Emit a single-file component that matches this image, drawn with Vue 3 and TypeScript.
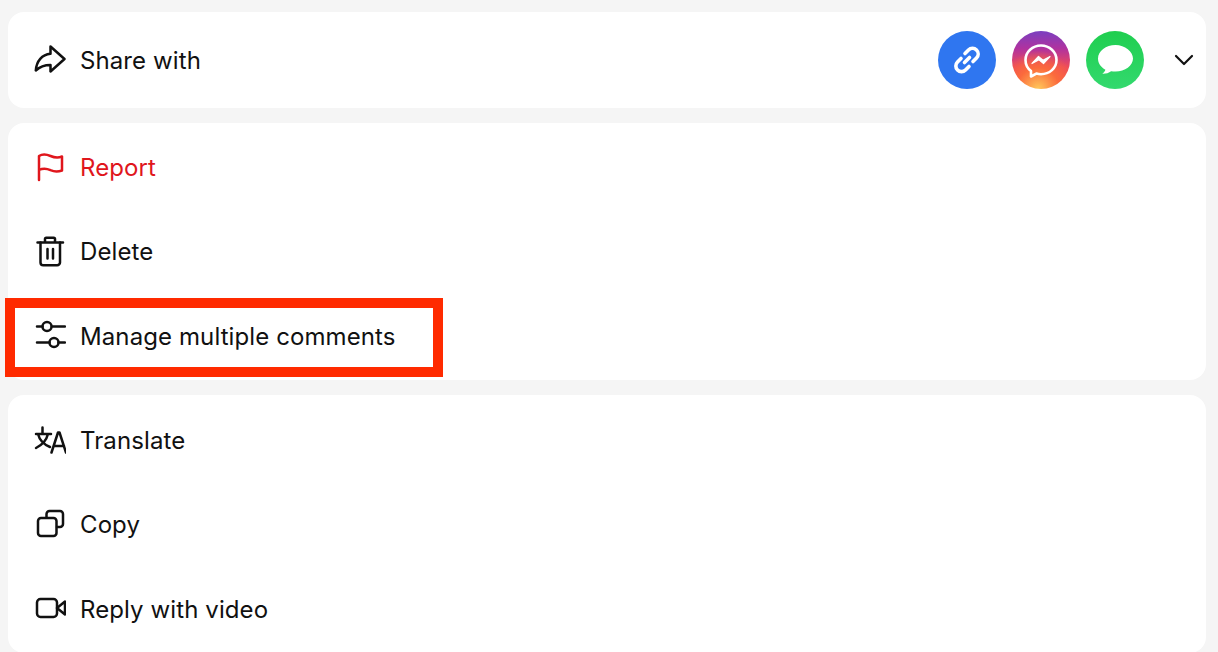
<script setup lang="ts">
const firstGroup = [
  { label: "Report", icon: "flag", danger: true },
  { label: "Delete", icon: "trash" },
  { label: "Manage multiple comments", icon: "sliders", marked: true },
];
const secondGroup = [
  { label: "Translate", icon: "translate" },
  { label: "Copy", icon: "copy" },
  { label: "Reply with video", icon: "video" },
];
const groups = [firstGroup, secondGroup];
</script>

<template>
  <div class="page">
    <section class="card share">
      <svg class="icon" viewBox="0 0 32 32" fill="none" stroke="currentColor" stroke-width="2.5" stroke-linejoin="round" stroke-linecap="round">
        <path d="M16.5 2.500 30.500 15 16.500 27.500V21C10 21 5.500 23 1.800 26.500 2.500 17 8 10.500 16.500 9.800Z" />
      </svg>
      <span class="label">Share with</span>
      <div class="apps">
        <div class="app link">
          <svg viewBox="0 0 58 58" fill="none" stroke="#fff" stroke-width="3.6" stroke-linecap="round">
            <path d="M27 22.500 30.500 19a5.600 5.600 0 0 1 8 8L35 30.500" />
            <path d="M31 35.500 27.500 39a5.600 5.600 0 0 1-8-8L23 27.500" />
            <path d="M26.500 31.500 31.500 26.500" />
          </svg>
        </div>
        <div class="app messenger">
          <svg viewBox="0 0 58 58">
            <path d="M29 14.500C20.500 14.500 13.500 20.800 13.500 29c0 4.500 2.100 8.400 5.500 11.100V45.500l5.300-2.900c1.500.4 3 .6 4.700.6 8.500 0 15.500-6.100 15.500-14.200S37.500 14.500 29 14.500Z" fill="none" stroke="#fff" stroke-width="2.600" stroke-linejoin="round" />
            <path d="M20 32.500 26.500 25.500 31 29.200 38 25.500 31.500 32.500 27 28.800Z" fill="#fff" stroke="#fff" stroke-width="1.200" stroke-linejoin="round" />
          </svg>
        </div>
        <div class="app message">
          <svg viewBox="0 0 58 58">
            <path d="M29.500 14C20 14 12 20 12 27.500c0 4.700 2.900 8.700 7.400 11.200-.6 1.600-1.700 3-3.100 4 3.200.2 6.400-.7 8.800-2.500 1.400.3 2.900.4 4.400.4 9.500 0 17.500-6.100 17.500-13.100S39 14 29.500 14Z" fill="#fff" />
          </svg>
        </div>
        <svg class="chevron" viewBox="0 0 20 12" fill="none" stroke="currentColor" stroke-width="2.200" stroke-linecap="round" stroke-linejoin="round">
          <path d="M2 2 10 10 18 2" />
        </svg>
      </div>
    </section>

    <section v-for="(group, i) in groups" :key="i" class="card list">
      <div v-for="item in group" :key="item.label" class="row" :class="{ danger: item.danger }">
        <svg class="icon" viewBox="0 0 32 32" fill="none" stroke="currentColor" stroke-width="2.500" stroke-linecap="round" stroke-linejoin="round">
          <template v-if="item.icon === 'flag'">
            <path d="M5 28V4C9 1.500 13 2.500 16.500 4c4 1.700 8 2 11.500.5v14c-4 1.500-8 1.300-11.500-.3C13 16.500 9 16 5 18" />
          </template>
          <template v-else-if="item.icon === 'trash'">
            <path d="M3.500 6.500H29M11 6.500V3c0-.8.500-1.300 1.300-1.300h7.400c.8 0 1.300.5 1.300 1.300v3.500" />
            <path d="M6.500 6.500V26.500A2.800 2.800 0 0 0 9.300 29.300H23.200A2.800 2.800 0 0 0 26 26.500V6.500" />
            <path d="M13.500 13V22.500M19 13V22.500" />
          </template>
          <template v-else-if="item.icon === 'sliders'">
            <path d="M3 6.500H8.500M18 6.500H31M3 22.500H15.500M24.500 22.500H31" />
            <circle cx="13" cy="6.500" r="4.500" />
            <circle cx="20" cy="22.500" r="4.500" />
          </template>
          <template v-else-if="item.icon === 'translate'">
            <path d="M2 9H17M8.500 2.500V9M14 9C12.500 15 8 20 2 23M4 9C5.500 15 10 19.500 16 22" />
            <path d="M17.500 27.500 24 7.500H25.500L32 27.500M19.500 21H30" />
          </template>
          <template v-else-if="item.icon === 'copy'">
            <path d="M12.500 8.500V5a3 3 0 0 1 3-3H26a3 3 0 0 1 3 3V15a3 3 0 0 1-3 3H23" />
            <rect x="4" y="9" width="18.500" height="18" rx="3" />
          </template>
          <template v-else>
            <rect x="3" y="6" width="20" height="18" rx="3.500" />
            <path d="M23 15 31 8.500V21.500Z" />
          </template>
        </svg>
        <span class="label">{{ item.label }}</span>
        <div v-if="item.marked" class="mark"></div>
      </div>
    </section>
  </div>
</template>

<style>
html,
body {
  background: #f5f5f5;
  overflow: hidden;
}
</style>

<style scoped>
.page {
  height: 652px;
  box-sizing: border-box;
  padding: 12px 12px 0 8px;
  overflow: hidden;
  display: flex;
  flex-direction: column;
  gap: 15.500px;
  font-family: Inter, "Liberation Sans", sans-serif;
  color: #111;
}
.card {
  background: #fff;
  border-radius: 16px;
  flex: none;
}
.share {
  height: 95.500px;
  box-sizing: border-box;
  display: flex;
  align-items: center;
  padding: 0.500px 0 0 26px;
}
.apps {
  margin-left: auto;
  display: flex;
  align-items: center;
  gap: 16px;
  padding-right: 12px;
}
.app {
  width: 58px;
  height: 58px;
  border-radius: 50%;
}
.app svg {
  display: block;
  width: 58px;
  height: 58px;
}
.link {
  background: #2f76f0;
}
.messenger {
  background:
    radial-gradient(circle at 45% 100%, #ffc95a 0, #fb6a3c 32%, rgba(245, 75, 70, 0) 58%),
    linear-gradient(180deg, #7a3fc0 0, #b0329f 30%, #ee4a5a 62%, #f65a45 100%);
}
.message {
  background: linear-gradient(180deg, #1fce4f, #33d96e);
}
.chevron {
  width: 20px;
  height: 12px;
  margin-left: 14px;
}
.list {
  padding: 2.500px 0 1.250px;
}
.list:last-child {
  padding-top: 3.500px;
}
.row {
  position: relative;
  height: 84.250px;
  display: flex;
  align-items: center;
  padding-left: 26px;
}
.icon {
  width: 32px;
  height: 32px;
  flex: none;
}
.label {
  margin-left: 14px;
  font-size: 24px;
  font-weight: 400;
  letter-spacing: 0.1px;
  white-space: nowrap;
}
.danger {
  color: #e0161c;
}
.mark {
  position: absolute;
  left: -3px;
  top: 4px;
  width: 438px;
  height: 79px;
  box-sizing: border-box;
  border: 10px solid #ff2a00;
}
</style>
